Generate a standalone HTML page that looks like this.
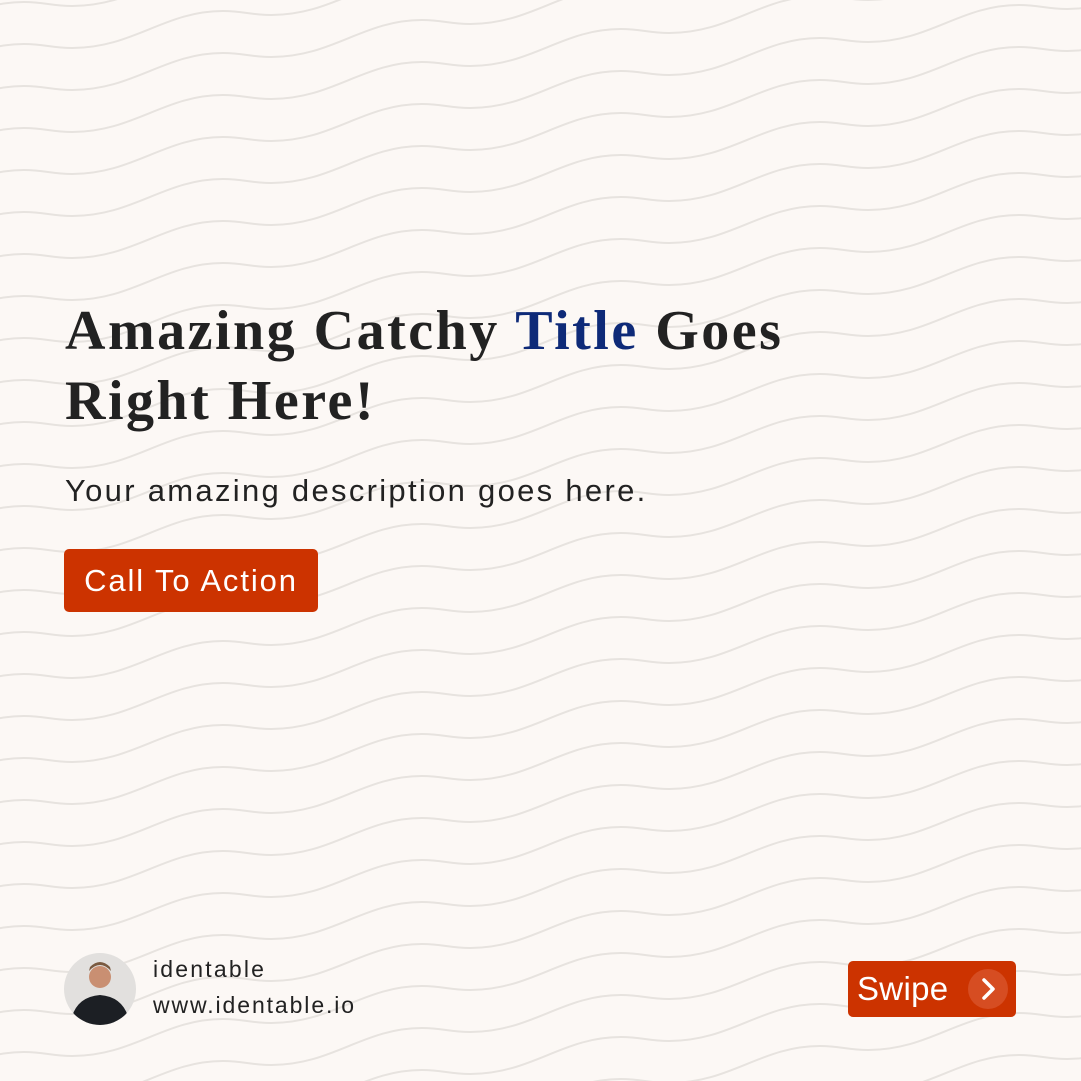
<!DOCTYPE html>
<html><head><meta charset="utf-8"><style>
html,body{margin:0;padding:0;overflow:hidden;width:1081px;height:1081px}
body{position:relative;background:#fcf8f5;font-family:"Liberation Sans",sans-serif}
svg.bg{position:absolute;left:0;top:0;overflow:hidden}
h1{position:absolute;left:65px;top:296px;margin:0;font-family:"Liberation Serif",serif;font-weight:bold;font-size:56px;line-height:70px;color:#222;letter-spacing:2.5px;width:900px}
h1 span{color:#0e2a78}
.desc{position:absolute;left:65px;top:473px;font-size:31px;color:#222;letter-spacing:2.3px}
.cta{position:absolute;left:64px;top:549px;width:254px;height:63px;background:#cc3300;border-radius:5px;color:#fff;font-size:31px;line-height:63px;text-align:center;letter-spacing:1.9px}
.av{position:absolute;left:64px;top:953px;width:72px;height:72px;border-radius:50%;background:#e2e0de;overflow:hidden}
.n1{position:absolute;left:153px;top:956px;font-size:23px;color:#222;letter-spacing:2.2px}
.n2{position:absolute;left:153px;top:992px;font-size:23px;color:#222;letter-spacing:1.9px}
.sw{position:absolute;left:848px;top:961px;width:168px;height:56px;background:#cc3300;border-radius:5px}
.sw .t{position:absolute;left:9px;top:8px;color:#fff;font-size:33px;line-height:40px;letter-spacing:0.3px}
.sw .c{position:absolute;left:120px;top:8px;width:40px;height:40px;border-radius:50%;background:#d64d22}
</style></head><body>
<svg class="bg" width="1081" height="1081" viewBox="0 0 1081 1081">
<defs>
<path id="l" fill="none" stroke="#e7e3df" stroke-width="2" d="M0,0 c20,0 28,4 48,4 c62,0 92,-37 151,-37 c20,0 28,4 48,4 c62,0 92,-37 151,-37 c20,0 28,4 48,4 c62,0 92,-37 151,-37 c20,0 28,4 48,4 c62,0 92,-37 151,-37 c20,0 28,4 48,4 c62,0 92,-37 151,-37 c20,0 28,4 48,4 c62,0 92,-37 151,-37 c20,0 28,4 48,4 c62,0 92,-37 151,-37"/>
<pattern id="p" patternUnits="userSpaceOnUse" x="-175" y="-7" width="1400" height="42">
<use href="#l" y="-42"/><use href="#l" y="0"/><use href="#l" y="42"/><use href="#l" y="84"/><use href="#l" y="126"/><use href="#l" y="168"/><use href="#l" y="210"/><use href="#l" y="252"/><use href="#l" y="294"/>
</pattern>
</defs>
<rect width="1081" height="1081" fill="url(#p)"/>
</svg>
<h1>Amazing Catchy <span>Title</span> Goes<br>Right Here!</h1>
<div class="desc">Your amazing description goes here.</div>
<div class="cta">Call To Action</div>
<div class="av"><svg width="72" height="72"><circle cx="36" cy="24" r="11" fill="#c98f72"/><path d="M25 18 Q36 6 47 18 L46 14 Q36 4 26 14Z" fill="#7a5a40"/><path d="M6 72 Q10 44 36 42 Q62 44 66 72Z" fill="#1c1f24"/></svg></div>
<div class="n1">identable</div>
<div class="n2">www.identable.io</div>
<div class="sw"><div class="t">Swipe</div><div class="c"><svg width="40" height="40"><path d="M16 11 L25 20 L16 29" fill="none" stroke="#fff" stroke-width="3.5" stroke-linecap="round" stroke-linejoin="round"/></svg></div></div>
</body></html>
